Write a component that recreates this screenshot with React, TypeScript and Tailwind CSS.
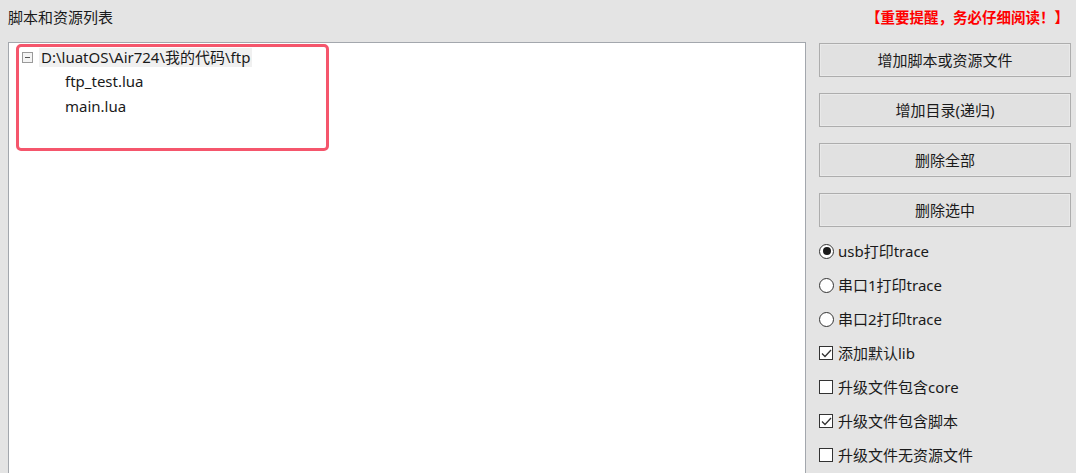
import React, { useState } from 'react';

const font = { fontFamily: '"Noto Sans", "Noto Sans CJK SC", sans-serif' };

const buttons = ['增加脚本或资源文件', '增加目录(递归)', '删除全部', '删除选中'];

const radios = ['usb打印trace', '串口1打印trace', '串口2打印trace'];

const checks = [
  { label: '添加默认lib', on: true },
  { label: '升级文件包含core', on: false },
  { label: '升级文件包含脚本', on: true },
  { label: '升级文件无资源文件', on: false },
];

const App: React.FC = () => {
  const [trace, setTrace] = useState(0);
  const [opts, setOpts] = useState(checks.map((c) => c.on));

  return (
    <div className="h-[473px] w-[1076px] overflow-hidden bg-[#e4e4e4] text-[#1a1a1a]" style={font}>
      {/* header */}
      <div className="flex h-[42px] items-start justify-between pl-2 pr-[7px] pt-[7px]">
        <span className="text-[15px] leading-[20px]">脚本和资源列表</span>
        <span className="text-[14.5px] font-bold leading-[20px] text-[#ff0000]">【重要提醒，务必仔细阅读！】</span>
      </div>

      <div className="flex h-[431px]">
        {/* file tree */}
        <div className="relative ml-2 flex-1 border border-b-0 border-[#a3a7ad] bg-white">
          <div className="pt-[2px] text-[15px]">
            <div className="flex h-[24px] items-center">
              <span className="ml-[13px] flex h-[11px] w-[11px] items-center justify-center border border-[#9a9a9a] bg-[#f4f4f4]">
                <span className="h-px w-[5px] bg-[#555]" />
              </span>
              <span className="ml-[6px] bg-[#f0f0f0] px-[2px] leading-[19px]">D:\luatOS\Air724\我的代码\ftp</span>
            </div>
            <div className="flex h-[25px] items-center pl-[56px]">ftp_test.lua</div>
            <div className="flex h-[25px] items-center pl-[56px]">main.lua</div>
          </div>
          {/* annotation highlight */}
          <div className="absolute left-[7px] top-[1px] h-[107px] w-[313px] rounded-[5px] border-[3px] border-[#f5566c]" />
        </div>

        {/* side panel */}
        <div className="ml-[13px] mr-[5px] flex w-[252px] flex-col pt-px">
          <div className="flex flex-col gap-[16px]">
            {buttons.map((b) => (
              <button
                key={b}
                className="h-[34px] w-full border border-[#adadad] bg-[#e1e1e1] text-[15px] leading-none shadow-[inset_0_0_0_1px_#e9e9e9]"
              >
                {b}
              </button>
            ))}
          </div>

          <div className="mt-[7px] flex flex-col text-[15px]">
            {radios.map((r, i) => (
              <label key={r} className="flex h-[34px] cursor-default items-center" onClick={() => setTrace(i)}>
                <span className="flex h-[15px] w-[15px] items-center justify-center rounded-full border border-[#333] bg-white">
                  {trace === i && <span className="h-[8px] w-[8px] rounded-full bg-[#1a1a1a]" />}
                </span>
                <span className="ml-[4px]">{r}</span>
              </label>
            ))}
            {checks.map((c, i) => (
              <label
                key={c.label}
                className="flex h-[34px] cursor-default items-center"
                onClick={() => setOpts(opts.map((v, j) => (j === i ? !v : v)))}
              >
                <span className="flex h-[14px] w-[14px] items-center justify-center border border-[#333] bg-white">
                  {opts[i] && (
                    <svg width="11" height="9" viewBox="0 0 11 9" fill="none">
                      <path d="M1 4.5 L4 7.5 L10 1" stroke="#333" strokeWidth="1.3" />
                    </svg>
                  )}
                </span>
                <span className="ml-[5px]">{c.label}</span>
              </label>
            ))}
          </div>
        </div>
      </div>
    </div>
  );
};

export default App;
